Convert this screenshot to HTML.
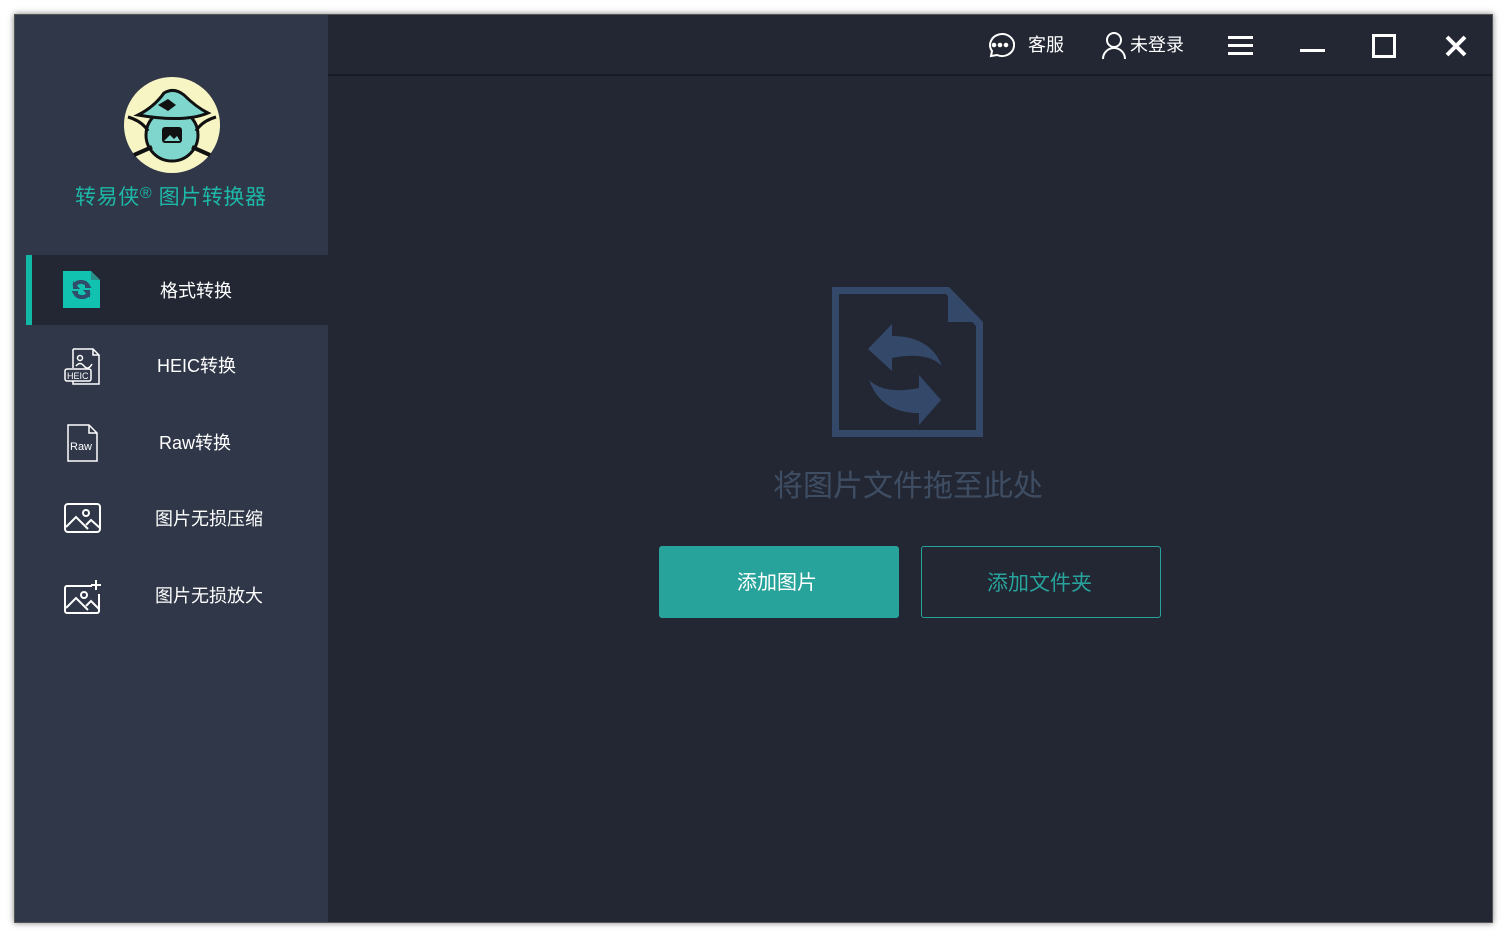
<!DOCTYPE html>
<html><head><meta charset="utf-8"><style>
*{margin:0;padding:0;box-sizing:border-box}
body{width:1507px;height:937px;background:#fff;position:relative;overflow:hidden;font-family:"Liberation Sans","Noto Sans CJK SC",sans-serif}
.win{position:absolute;left:14px;top:14px;width:1479px;height:909px;background:#222733;box-shadow:0 0 6px rgba(0,0,0,.5);border:1px solid #555}
.side{position:absolute;left:0;top:0;width:313px;height:907px;background:#2f3748}
.hdrline{position:absolute;left:313px;top:59px;right:0;height:2px;background:#171b23}
.t{position:absolute;color:#fff;font-size:18px;white-space:nowrap;line-height:1.2}
.nav{position:absolute;left:11px;width:302px;height:70px}
</style></head><body>
<div class="win">
<div class="side">
  <svg style="position:absolute;left:109px;top:62px" width="96" height="96" viewBox="0 0 96 96">
    <circle cx="48" cy="48" r="48" fill="#f7f5c4"/>
    <circle cx="48" cy="58" r="26" fill="#7fd6cd" stroke="#111" stroke-width="3"/>
    <path d="M14 38 Q30 30 40 16 Q50 10 60 18 Q72 30 84 36 Q60 46 14 38Z" fill="#7fd6cd" stroke="#111" stroke-width="3"/>
    <path d="M34 28 l10-6 8 6-8 6z" fill="#111"/>
    <path d="M4 40 Q18 44 24 54 M92 40 Q78 44 72 54" stroke="#111" stroke-width="3" fill="none"/>
    <path d="M10 78 L28 70 M86 78 L68 70" stroke="#111" stroke-width="4"/>
    <rect x="38" y="50" width="20" height="16" rx="3" fill="#111"/>
    <path d="M40 64 l6-6 4 4 3-3 3 5z" fill="#7fd6cd"/>
  </svg>
  <div class="t" style="left:60px;top:169px;color:#1db8a8;font-size:21px;letter-spacing:0.6px">转易侠<span style="font-size:16px;vertical-align:6px">®</span> 图片转换器</div>
  <div class="nav" style="top:240px;background:#222733;border-left:6px solid #11b8a6">
    <svg style="position:absolute;left:31px;top:16px" width="37" height="37" viewBox="0 0 37 37"><path d="M0 0h28l9 9v28H0z" fill="#11c2b0"/><path d="M28 0v9h9z" fill="#2a8f88"/><path d="M11 15a8 8 0 0 1 14 0l-3 0M26 22a8 8 0 0 1-14 0l3 0" stroke="#2f4d6a" stroke-width="4" fill="none"/><path d="M10 10v8h7zM27 27v-8h-7z" fill="#2f4d6a"/></svg>
    <div class="t" style="left:128px;top:26px">格式转换</div>
  </div>
  <svg style="position:absolute;left:49px;top:333px" width="37" height="37" viewBox="0 0 37 37" fill="none" stroke="#fff" stroke-width="1.5"><path d="M9 1h20l6 6v29H9v-3M9 20V1"/><path d="M29 1v6h6"/><circle cx="16" cy="10" r="2.5"/><path d="M12 18q4-5 8 0t8-2"/><rect x="1" y="21" width="26" height="12" rx="2"/><text x="3" y="31" font-size="9" fill="#fff" stroke="none" font-family="Liberation Sans">HEIC</text></svg>
  <div class="t" style="left:142px;top:341px">HEIC转换</div>
  <svg style="position:absolute;left:52px;top:409px" width="32" height="38" viewBox="0 0 32 38" fill="none" stroke="#fff" stroke-width="1.5"><path d="M1 1h21l8 8v28H1z"/><path d="M22 1v8h8"/><text x="3" y="26" font-size="11" fill="#fff" stroke="none" font-family="Liberation Sans">Raw</text></svg>
  <div class="t" style="left:144px;top:418px">Raw转换</div>
  <svg style="position:absolute;left:49px;top:488px" width="38" height="32" viewBox="0 0 38 32" fill="none" stroke="#fff" stroke-width="2"><rect x="1" y="1" width="35" height="28" rx="3"/><circle cx="22" cy="10" r="3"/><path d="M2 24l10-10 12 12M22 22l5-5 9 8"/></svg>
  <div class="t" style="left:140px;top:494px">图片无损压缩</div>
  <svg style="position:absolute;left:49px;top:565px" width="38" height="34" viewBox="0 0 38 34" fill="none" stroke="#fff" stroke-width="2"><path d="M28 6H3a2 2 0 0 0-2 2v23a2 2 0 0 0 2 2h30a2 2 0 0 0 2-2V14"/><circle cx="20" cy="15" r="3"/><path d="M2 28l10-10 12 12M22 26l5-5 8 8M32 0v10M27 5h10"/></svg>
  <div class="t" style="left:140px;top:571px">图片无损放大</div>
</div>
<div class="hdrline"></div>
<svg style="position:absolute;left:970px;top:16px" width="30" height="30" viewBox="0 0 30 30" fill="none" stroke="#fff" stroke-width="2"><path d="M6 25l1-5A12 11 0 1 1 12 24z"/><circle cx="9" cy="14" r="1.3" fill="#fff"/><circle cx="15" cy="14" r="1.3" fill="#fff"/><circle cx="21" cy="14" r="1.3" fill="#fff"/></svg>
<div class="t" style="left:1013px;top:20px">客服</div>
<svg style="position:absolute;left:1086px;top:16px" width="26" height="28" viewBox="0 0 26 28" fill="none" stroke="#fff" stroke-width="2"><circle cx="13" cy="9" r="7"/><path d="M2 28a11 11 0 0 1 22 0"/></svg>
<div class="t" style="left:1115px;top:20px">未登录</div>
<div style="position:absolute;left:1213px;top:21px;width:25px;height:3px;background:#fff;box-shadow:0 8px 0 #fff,0 16px 0 #fff"></div>
<div style="position:absolute;left:1285px;top:34px;width:25px;height:3px;background:#fff"></div>
<div style="position:absolute;left:1357px;top:19px;width:24px;height:24px;border:3px solid #fff"></div>
<svg style="position:absolute;left:1430px;top:20px" width="22" height="22" viewBox="0 0 22 22" stroke="#fff" stroke-width="4"><path d="M2 2l18 18M20 2L2 20"/></svg>
<svg style="position:absolute;left:816px;top:271px" width="152" height="152" viewBox="0 0 152 152" fill="#34496a">
  <path d="M1 1h117l34 35v115H1z M8 8v136h137V40L115 8z" fill-rule="evenodd"/>
  <path d="M117 1v35h27z"/>
  <path d="M37 63l24-25v12q38 0 50 30q-15-15-50-8v13z"/>
  <path d="M38 94q15 15 50 8v-13l22 25-22 25v-12q-38 0-50-33z"/>
</svg>
<div class="t" style="left:758px;top:454px;font-size:30px;color:#3f4d63">将图片文件拖至此处</div>
<div style="position:absolute;left:644px;top:531px;width:240px;height:72px;background:#28a39b;border-radius:3px"></div>
<div class="t" style="left:722px;top:556px;font-size:20px">添加图片</div>
<div style="position:absolute;left:906px;top:531px;width:240px;height:72px;border:1px solid #28a39b;border-radius:3px"></div>
<div class="t" style="left:972px;top:556px;font-size:21px;color:#28a39b">添加文件夹</div>
</div>
</body></html>
